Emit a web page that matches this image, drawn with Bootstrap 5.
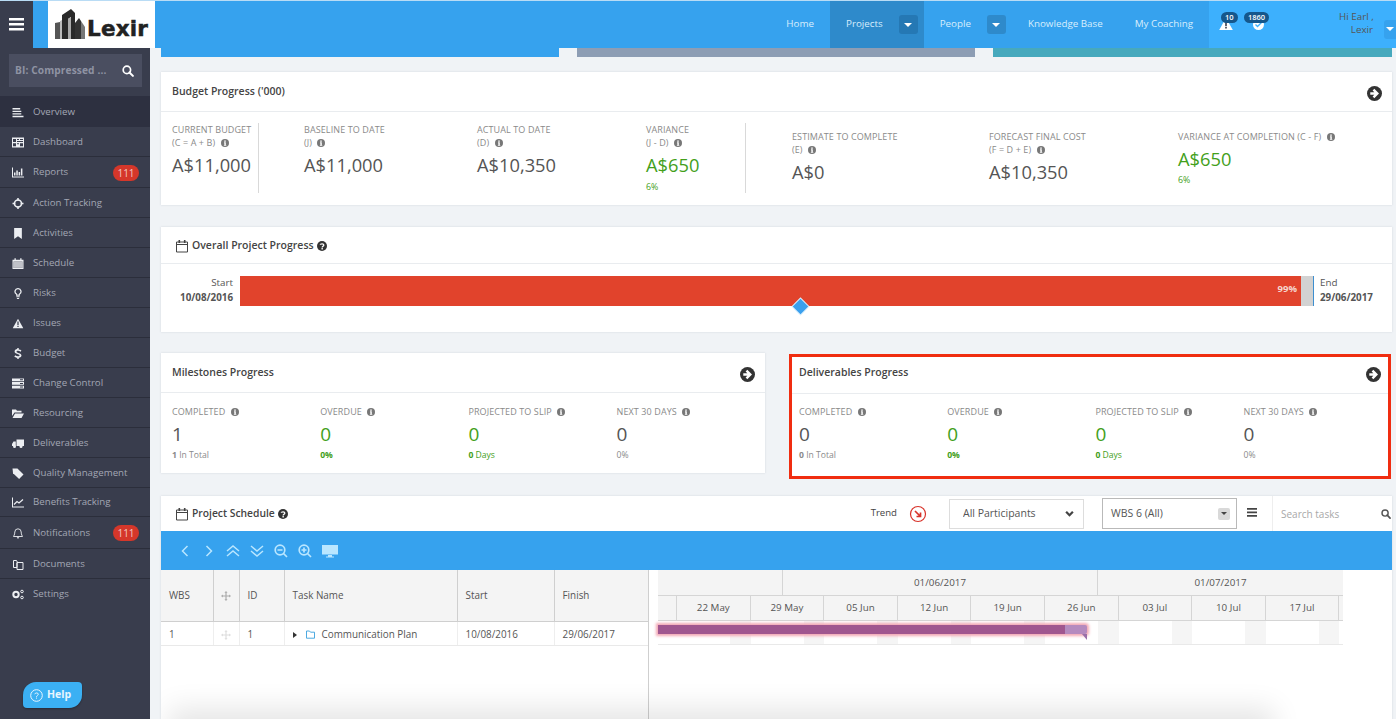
<!DOCTYPE html>
<html lang="en"><head><meta charset="utf-8"><title>Lexir</title>
<link href="https://cdn.jsdelivr.net/npm/bootstrap@5.3.0/dist/css/bootstrap.min.css" rel="stylesheet">
<style>
html,body{height:719px;overflow:hidden}
body{font-family:"Open Sans",sans-serif;font-size:10.5px;color:#555;background:#f0f3f6;line-height:1.3}
.ic{display:inline-block;fill:currentColor;flex:none}
.topline{height:1px;background:#b9dcf5}
.topbar{height:47px;background:#36a2ee;padding:0}
.burger{width:33px;height:47px;background:#393d4d;color:#fff;border:0;padding:0}
.logo-gap{width:15px}
.logo{width:107px;height:47px;background:#fff;padding:8px 0 0 7px;gap:0;align-items:flex-start}
.logo-txt{font-family:"DejaVu Sans",sans-serif;font-weight:700;font-size:21.5px;color:#222;letter-spacing:.2px;-webkit-text-stroke:.5px #222;line-height:1;margin:9px 0 0 1px}
.tn{height:47px;color:#d8eefd;font-size:9.8px;padding:0 16px;gap:16px}
.tn.on{background:#2e8acb}
.tn.has-c{padding-right:6px}
.tn-caret{width:19px;height:19px;border-radius:3px;background:#2e8acb;color:#fff;border:0;padding:0;font-size:0}
.on .tn-caret{background:#2578b4}
.tri{width:0;height:0;border:4px solid transparent;border-top:4px solid currentColor;border-bottom:0;display:inline-block}
.top-right{width:187px;height:47px;background:#3db0fd;color:#e7f5ff}
.alert-ic{position:relative;width:16px;height:16px}
.ct{position:absolute;top:-5px;left:-1px;background:#15578c;color:#fff;font-size:7.5px;font-weight:600;border-radius:8px;padding:1px 4px;line-height:9px}
.hi{font-size:9.8px;line-height:13px;text-align:right;position:absolute;left:1339px;top:9px;width:34px;white-space:nowrap}
.hi-caret{position:absolute;left:1384px;top:19px;width:12px;height:19px;background:#36a2ee;border-radius:3px 0 0 3px;color:#fff;padding:7px 0 0 2px;line-height:0}
.sidebar{width:150px;height:671px;background:#393d4d;flex:none;position:relative}
.sb-search{margin:6px 8px 9px 9px;height:33px;background:#4a4e60;color:#8f93a3;font-weight:700;font-size:10.2px;padding:0 8px 0 6px;letter-spacing:.1px}
.sb-item{height:30px;padding:1px 11px 0 12px;color:#a3a7b4;background:transparent;border:0;border-bottom:1px solid #2b2e3b;border-radius:0;font-size:9.7px;gap:0}
.sb-item.on{background:#2d3040;height:31px;border-bottom:0}
.sb-item.tall{height:31px}
.sb-item.taller{height:32px}
.sb-item .ic{color:#eceef2;margin-right:9px;width:12px;height:11px}
.sb-b{background:#d5372a;color:#f3c9c3;font-weight:400;font-size:10px;border-radius:8px;width:26px;padding:2px 0;line-height:12px}
.help{position:absolute;left:23px;top:634px;width:59px;height:26px;background:#3bb0f3;color:#e8f6ff;font-weight:700;font-size:10.5px;border-radius:13px 4px 13px 4px;gap:4px;padding-left:7px;box-shadow:0 1px 2px rgba(0,0,0,.3);border:0}
.maincol{flex:1;padding:0 4px 0 11px;min-width:0;position:relative;height:671px;overflow:hidden}
.strips{display:grid;grid-template-columns:398px 398px 399px;gap:18px;margin-bottom:15px}
.strip{height:9px}
.panel{border:0;border-radius:0;box-shadow:0 0 2px rgba(120,130,150,.25);background:#fff}
.panel .card-header{background:#fff;border-bottom:1px solid #e9ecef;border-radius:0;padding:0 11px;height:40px;color:#444;font-weight:600;font-size:10.5px}
.go{width:15px;height:15px;color:#333;margin:4px -1px 0 0}
.budget{height:133px;margin-bottom:22px}
.budget-grid{display:grid;grid-template-columns:132px 173px 169px 146px 197px 189px 1fr;padding:11px 11px 0;height:93px}
.lab{color:#8a8a8a;font-size:9px;line-height:13px;text-transform:uppercase;letter-spacing:.1px}
.val{font-size:18.3px;color:#555;line-height:24px;margin-top:4px;font-weight:400}
.grn{color:#43a01b}
.mini{font-size:8.8px;margin-top:5px}
.i{width:8px;height:8px;color:#777;vertical-align:-.5px;margin-left:3px}
.divr{border-right:1px solid #d9d9d9;height:70px}
.shift{padding-top:7px}
.overall{height:105px;margin-bottom:21px}
.overall .card-header{height:37px;font-weight:600;gap:3px;padding:1px 11px 0 14px}
.pbar-wrap{padding:12px 13px 0 18px;font-size:9.8px;gap:7px}
.pbar-edge{width:54px;text-align:right;line-height:14.5px;white-space:nowrap}
.pbar{flex:1;height:30px;background:#d2d2d2;border-right:1px solid #3d8fd0;border-radius:0;position:relative;overflow:visible}
.pbar .progress-bar{width:98.88%;background:#e1432c;color:#f6d6cf;font-weight:700;font-size:9.5px;text-align:right;padding-right:4px;overflow:visible;display:block;line-height:25px}
.pin{position:absolute;left:555px;top:25px;width:11px;height:11px;background:#3aa0ee;transform:rotate(45deg);box-shadow:0 0 0 1px #d9eefc}
.two{display:grid;grid-template-columns:604px 602px;gap:24px;align-items:start;margin-bottom:17px}
.stat{height:120px}
.stat-body{display:grid;grid-template-columns:repeat(4,148.2px);padding:12px 11px 0}
.red-box{border:3px solid #f02d10;height:125px;margin-top:1px}
.red-box .stat{box-shadow:none;height:119px}
.red-box .card-header{padding:0 8px 4px 7px;height:37px}
.red-box .go{margin-top:2px}
.red-box .stat-body{padding-left:7px;padding-top:11px}
.stat-body .val{font-size:19px;margin-top:4px;line-height:24px}
.stat-body .mini{margin-top:4px;color:#8a8a8a;font-size:8.6px}
.stat-body .mini.grn{color:#43a01b}
.sched{height:224px;position:relative;border-radius:0;overflow:hidden}
.sched-h{height:35px;padding-left:14px;color:#444;font-weight:600;font-size:10.3px;gap:3px}
.sel{font-size:10.5px;color:#555;height:30px;padding:0 8px 0 13px;border:1px solid #ddd;border-radius:0;width:135px;background-color:#fff;font-family:inherit;background-size:11px 9px;background-position:right 8px center;background-image:url("data:image/svg+xml,%3csvg xmlns='http://www.w3.org/2000/svg' viewBox='0 0 16 16'%3e%3cpath fill='none' stroke='%23444' stroke-width='4' d='M2 5l6 6 6-6'/%3e%3c/svg%3e")}
.sel2{height:31px;border:1px solid #b9b9b9;color:#555;width:135px;padding:0 6px 0 8px;font-size:10.5px}
.selbtn{width:12px;height:12px;background:#d9d9d9;color:#444;border-radius:2px}
.srch{width:120px;height:35px;border-left:1px solid #eee;padding:0 1px 0 8px}
.srch input{border:0;padding:0;font-size:10px;height:28px;color:#555;box-shadow:none;width:100px;border-radius:0}
.srch input::placeholder{color:#a8a8a8}
.tools{height:39px;background:#36a2ee;color:#b9e6ff;padding-left:17px;gap:0}
.tools svg{width:14px;height:14px;margin-right:10px}
.tbl{width:487px;table-layout:fixed;margin:0;font-size:9.9px;color:#555}
.tbl th{background:#f4f4f4;font-weight:400;height:51px;padding:0 0 0 8px;border-right:1px solid #cfcfcf;border-bottom:1px solid #cfcfcf;vertical-align:middle}
.tbl td{height:24px;padding:2px 0 0 8px;border-right:1px solid #eee;border-bottom:1px solid #e9e9e9;vertical-align:middle;background:#fff}
.tbl th:last-child,.tbl td:last-child{border-right:0}
.left{width:487px;border-right:1px solid #cfcfcf;height:150px;box-sizing:content-box}
.gutter{width:9px}
.gantt{width:685px;font-size:9.8px;color:#555;position:relative}
.g1{height:26px;background:#f4f4f4;border-bottom:1px solid #d5d5d5}
.g1>div{border-right:1px solid #d5d5d5;text-align:center;line-height:25px}
.g2{height:25px;background:#f4f4f4;border-bottom:1px solid #d5d5d5}
.g2>div{border-right:1px solid #d5d5d5;text-align:center;line-height:24px;width:73.6px;flex:none}
.g3{height:24px;border-bottom:1px solid #e9e9e9;background-image:repeating-linear-gradient(90deg,#fff 0,#fff 53px,#f5f5f5 53px,#f5f5f5 73.6px);background-position:19px 0}
.gbar{position:absolute;left:0;top:55px;width:429px;height:9px;background:#b58abf;box-shadow:0 0 3px 2px #f3a6b4;border-radius:0 2px 2px 0}
.gbar-d{height:100%;width:407px;background:#a0568f}
.gnot{position:absolute;right:0;top:9px;border-top:6px solid #9b6fa8;border-left:5px solid transparent}
.fade-b{position:absolute;left:20px;right:130px;bottom:-30px;height:30px;box-shadow:0 0 28px 12px rgba(0,0,0,.1);pointer-events:none}
</style></head>
<body>
<svg width="0" height="0" class="position-absolute">
<defs>
<symbol id="cal" viewBox="0 0 14 14"><path d="M1.5 3h11v10h-11zM1.5 5.500h11" fill="none" stroke="currentColor" stroke-width="1"/><path d="M3.500 1h1.600v3H3.500zM8.900 1h1.600v3H8.900z"/></symbol>
<symbol id="go" viewBox="0 0 16 16"><circle cx="8" cy="8" r="8"/><path d="M3.500 6.600h4.300L6 4.800l1.800-1.800L12.800 8l-5 5L6 11.200l1.800-1.800H3.500z" fill="#fff"/></symbol>
<symbol id="inf" viewBox="0 0 10 10"><circle cx="5" cy="5" r="5"/><path d="M4 1.800h2v1.500H4zM3.800 4.200h2.200v3.200h.6v1H3.600v-1h.6V5.200h-.4z" fill="#fff"/></symbol>
<symbol id="q" viewBox="0 0 12 12"><circle cx="6" cy="6" r="6"/><path d="M3.800 4.500C4 3 8.200 2.700 8.200 4.800c0 1.500-2 1.500-2 3" fill="none" stroke="#fff" stroke-width="1.500"/><rect x="5.300" y="8.500" width="1.800" height="1.600" fill="#fff"/></symbol>
<symbol id="mag" viewBox="0 0 14 14"><circle cx="5.700" cy="5.700" r="4.300" fill="none" stroke="currentColor" stroke-width="2"/><path d="M8.700 8.700l4 4" stroke="currentColor" stroke-width="2.400" stroke-linecap="round"/></symbol>
<symbol id="warn" viewBox="0 0 14 14"><path d="M7 .8L13.800 13H.2z"/><path d="M6.200 4.500h1.600v4.500H6.200zM6.200 9.800h1.600v1.600H6.200z" fill="#393d4d"/></symbol>
<symbol id="mv" viewBox="0 0 14 14"><path d="M7 0l2.200 2.600H7.800v3.600h3.600V4.800L14 7l-2.600 2.200V7.800H7.800v3.600h1.400L7 14l-2.200-2.600h1.400V7.800H2.600v1.400L0 7l2.600-2.200v1.400h3.600V2.600H4.800z"/></symbol>
</defs>
</svg>
<div class="topline"></div>
<nav class="navbar topbar flex-nowrap align-items-start">
  <button class="burger d-flex align-items-center justify-content-center" aria-label="Menu"><svg width="15" height="13" viewBox="0 0 15 13" class="ic"><path d="M0 0h15v2.500H0zM0 5h15v2.500H0zM0 10h15v2.500H0z"/></svg></button>
  <div class="logo-gap"></div>
  <div class="logo d-flex">
    <svg width="31" height="31" viewBox="0 0 31 31" class="ic"><path d="M0 30V14l5-1v17z" fill="#555"/><path d="M5 30V12l2-1v19z" fill="#bbb"/><path d="M7 30V6l9-6 4 4v26h-4V8l-3 2v20z" fill="#2a2a2a"/><path d="M13 30V10l3-2v22z" fill="#aaa"/><path d="M20 30V14l4-5 2 3v18z" fill="#333"/><path d="M26 30V12l4 6v12z" fill="#777"/></svg>
    <span class="logo-txt">Lexir</span>
  </div>
  <div class="d-flex ms-auto align-items-start">
    <a class="tn d-flex align-items-center text-decoration-none">Home</a>
    <div class="tn has-c on d-flex align-items-center"><span>Projects</span><button class="tn-caret d-flex align-items-center justify-content-center" aria-label="Projects menu"><i class="tri"></i></button></div>
    <div class="tn has-c d-flex align-items-center"><span>People</span><button class="tn-caret d-flex align-items-center justify-content-center" aria-label="People menu"><i class="tri"></i></button></div>
    <a class="tn d-flex align-items-center text-decoration-none">Knowledge Base</a>
    <a class="tn d-flex align-items-center text-decoration-none">My Coaching</a>
    <div class="top-right d-flex align-items-center ps-2">
      <span class="alert-ic d-inline-block" style="margin-left:2px"><svg width="14" height="14" class="ic" style="color:#fff"><use href="#warn"/></svg><span class="ct" style="left:2px">10</span></span>
      <span class="alert-ic d-inline-block" style="margin-left:18px"><svg width="11" height="11" viewBox="0 0 11 11" class="ic" style="margin-top:2px;color:#fff"><circle cx="5.500" cy="5.500" r="5.500"/><path d="M2.500 5.500l2 2 4-4" fill="none" stroke="#3db0fd" stroke-width="1.300"/></svg><span class="ct" style="left:-9px">1860</span></span>
    </div>
  </div>
  <div class="hi">Hi Earl ,<br>Lexir</div>
  <div class="hi-caret"><i class="tri"></i></div>
</nav>
<div class="d-flex">
<aside class="sidebar">
  <div class="sb-search d-flex align-items-center justify-content-between"><span>BI: Compressed ...</span><svg width="12" height="12" class="ic" style="color:#fff"><use href="#mag"/></svg></div>
  <div class="list-group list-group-flush">
    <a class="list-group-item sb-item on d-flex align-items-center"><svg class="ic" viewBox="0 0 10 10"><path d="M0 1h7v1.300H0zM0 3.300h8v1.300H0zM0 5.600h8v1.300H0zM0 8h10v1.300H0z"/></svg>Overview</a>
    <a class="list-group-item sb-item d-flex align-items-center"><svg class="ic" viewBox="0 0 12 10"><path d="M0 0h12v10H0zM1 1.500v3h3v-3zM5 1.500v1h2v-1zM8 1.500v1h3v-1zM5 3.500v1h6v-1zM1 5.800v3h3v-3zM5 5.800v1h2v-1zM8 5.800v3h3v-3z" fill-rule="evenodd"/></svg>Dashboard</a>
    <a class="list-group-item sb-item tall d-flex align-items-center"><svg class="ic" viewBox="0 0 12 10"><path d="M0 0h1v9h11v1H0zM2 5h1.500v3H2zM4.300 3h1.500v5H4.300zM6.600 4.500h1.500V8H6.600zM8.900 1h1.500v7H8.900z"/></svg>Reports<span class="badge sb-b ms-auto">111</span></a>
    <a class="list-group-item sb-item d-flex align-items-center"><svg class="ic" viewBox="0 0 10 10"><circle cx="5" cy="5" r="3.200" fill="none" stroke="currentColor" stroke-width="1.500"/><path d="M4.300 0h1.400v2.500H4.300zM4.300 7.500h1.400V10H4.300zM0 4.300h2.500v1.400H0zM7.500 4.300H10v1.400H7.500z"/></svg>Action Tracking</a>
    <a class="list-group-item sb-item d-flex align-items-center"><svg class="ic" viewBox="0 0 10 10"><path d="M1.500 0h7v10L5 7.500 1.500 10z"/></svg>Activities</a>
    <a class="list-group-item sb-item d-flex align-items-center"><svg class="ic" viewBox="0 0 10 10"><path d="M0 1.500h1.800V.2h1.200v1.300h4V.2h1.200v1.300H10V10H0zM1 3.200V9h8V3.200z" fill-rule="evenodd"/><path d="M1 3.200h8V9H1z" fill-opacity=".75"/></svg>Schedule</a>
    <a class="list-group-item sb-item d-flex align-items-center"><svg class="ic" viewBox="0 0 10 10"><path d="M5 0a3.200 3.200 0 0 0-1.800 5.900V7h3.600V5.900A3.200 3.200 0 0 0 5 0zm0 1.200a2 2 0 0 1 1 3.800v.8H4V5a2 2 0 0 1 1-3.800zM3.500 7.600h3v.9h-3zM4 9h2v1H4z" fill-rule="evenodd"/></svg>Risks</a>
    <a class="list-group-item sb-item d-flex align-items-center"><svg class="ic" viewBox="0 0 14 14"><use href="#warn"/></svg>Issues</a>
    <a class="list-group-item sb-item d-flex align-items-center"><svg class="ic" viewBox="0 0 10 12"><path d="M4.200 0h1.600v1.500c1.300.1 2.300.6 2.900 1.100L7.800 4C7 3.500 6 3.100 5 3.100c-1 0-1.600.4-1.600 1 0 1.700 5.400 1 5.400 4.200 0 1.400-1.100 2.200-3 2.400V12H4.200v-1.300c-1.300-.1-2.500-.7-3.200-1.400l1-1.400c.9.700 1.900 1.200 3 1.200s1.700-.4 1.700-1.100c0-1.700-5.400-1-5.400-4.100 0-1.500 1.100-2.400 2.900-2.700z"/></svg>Budget</a>
    <a class="list-group-item sb-item d-flex align-items-center"><svg class="ic" viewBox="0 0 12 10"><path d="M0 0h12v2.700H0zM0 3.600h12v2.700H0zM0 7.300h12V10H0z"/><path d="M8 .8h3v1H8zM8 4.500h3v1H8zM8 8.100h3v1H8z" fill="#393d4d"/></svg>Change Control</a>
    <a class="list-group-item sb-item d-flex align-items-center"><svg class="ic" viewBox="0 0 12 10"><path d="M0 1h4l1 1.300h4.500V4H2.500L0 7.500zM3 5h9l-2.500 4.500H.5z"/></svg>Resourcing</a>
    <a class="list-group-item sb-item d-flex align-items-center"><svg class="ic" viewBox="0 0 12 10"><path d="M4.500 1H12v6.500H4.500zM3.800 3v4.500H0V5.500L1.500 3z"/><circle cx="2.500" cy="8" r="1.500"/><circle cx="9" cy="8" r="1.500"/></svg>Deliverables</a>
    <a class="list-group-item sb-item d-flex align-items-center"><svg class="ic" viewBox="0 0 10 10"><path d="M0 .5h4.500L10 6 6 10 .5 4.700z"/></svg>Quality Management</a>
    <a class="list-group-item sb-item d-flex align-items-center" style="height:29px"><svg class="ic" viewBox="0 0 12 10"><path d="M0 0h1v9h11v1H0z"/><path d="M2 7l3-3 2 1.500L11 2" fill="none" stroke="currentColor" stroke-width="1.200"/></svg>Benefits Tracking</a>
    <a class="list-group-item sb-item taller d-flex align-items-center"><svg class="ic" viewBox="0 0 10 11"><path d="M5 .8A3.300 3.300 0 0 0 1.800 4c0 3-1.300 4-1.300 4.500h9c0-.5-1.300-1.500-1.300-4.500A3.300 3.300 0 0 0 5 .8z" fill="none" stroke="currentColor" stroke-width=".9"/><path d="M3.800 9.200h2.400a1.200 1.200 0 0 1-2.400 0z"/></svg>Notifications<span class="badge sb-b ms-auto">111</span></a>
    <a class="list-group-item sb-item d-flex align-items-center"><svg class="ic" viewBox="0 0 11 11"><path d="M4.500 3.500h6v7h-6zM1 1.500h3l1 2H4.500v5H1z" fill="none" stroke="currentColor" stroke-width="1"/></svg>Documents</a>
    <a class="list-group-item sb-item d-flex align-items-center"><svg class="ic" viewBox="0 0 12 10"><circle cx="4" cy="5" r="2.700" fill="none" stroke="currentColor" stroke-width="2"/><circle cx="10" cy="2" r="1.300" fill="none" stroke="currentColor" stroke-width="1"/><circle cx="10" cy="8" r="1.300" fill="none" stroke="currentColor" stroke-width="1"/></svg>Settings</a>
  </div>
  <button class="help d-flex align-items-center"><svg width="13" height="13" viewBox="0 0 13 13"><circle cx="6.500" cy="6.500" r="5.800" fill="none" stroke="#e8f6ff" stroke-width="1"/><path d="M4.700 5.200C4.900 3.600 8.300 3.500 8.300 5.200c0 1.300-1.800 1.300-1.800 2.600" fill="none" stroke="#e8f6ff" stroke-width="1"/><rect x="6" y="8.600" width="1" height="1" fill="#e8f6ff"/></svg>Help</button>
</aside>
<main class="maincol">
  <div class="strips">
    <div class="strip" style="background:#36a2ee"></div>
    <div class="strip" style="background:#8d9db4"></div>
    <div class="strip" style="background:#47a9bd"></div>
  </div>

  <section class="card panel budget">
    <div class="card-header d-flex align-items-center justify-content-between"><span>Budget Progress ('000)</span><svg class="ic go"><use href="#go"/></svg></div>
    <div class="budget-grid">
      <div class="divr" style="width:87px"><div class="lab">Current Budget<br>(C = A + B) <svg class="ic i"><use href="#inf"/></svg></div><div class="val">A$11,000</div></div>
      <div><div class="lab">Baseline to Date<br>(J) <svg class="ic i"><use href="#inf"/></svg></div><div class="val">A$11,000</div></div>
      <div><div class="lab">Actual to Date<br>(D) <svg class="ic i"><use href="#inf"/></svg></div><div class="val">A$10,350</div></div>
      <div class="divr" style="width:100px"><div class="lab">Variance<br>(J - D) <svg class="ic i"><use href="#inf"/></svg></div><div class="val grn">A$650</div><div class="mini grn">6%</div></div>
      <div class="shift"><div class="lab">Estimate to Complete<br>(E) <svg class="ic i"><use href="#inf"/></svg></div><div class="val">A$0</div></div>
      <div class="shift"><div class="lab">Forecast Final Cost<br>(F = D + E) <svg class="ic i"><use href="#inf"/></svg></div><div class="val">A$10,350</div></div>
      <div class="shift"><div class="lab text-nowrap">Variance at Completion (C - F) <svg class="ic i"><use href="#inf"/></svg></div><div class="val grn" style="margin-top:4px">A$650</div><div class="mini grn" style="margin-top:4px">6%</div></div>
    </div>
  </section>

  <section class="card panel overall">
    <div class="card-header d-flex align-items-center"><svg class="ic" width="14" height="14"><use href="#cal"/></svg><span>Overall Project Progress</span><svg class="ic" width="10" height="10" style="color:#333"><use href="#q"/></svg></div>
    <div class="pbar-wrap d-flex align-items-start">
      <div class="pbar-edge">Start<br><b>10/08/2016</b></div>
      <div class="progress pbar"><div class="progress-bar">99%</div><span class="pin"></span></div>
      <div class="pbar-edge text-start" style="margin-left:-1px;width:59px">End<br><b>29/06/2017</b></div>
    </div>
  </section>

  <div class="two">
    <section class="card panel stat">
      <div class="card-header d-flex align-items-center justify-content-between"><span>Milestones Progress</span><svg class="ic go"><use href="#go"/></svg></div>
      <div class="stat-body">
        <div><div class="lab">Completed <svg class="ic i"><use href="#inf"/></svg></div><div class="val">1</div><div class="mini"><b>1</b> In Total</div></div>
        <div><div class="lab">Overdue <svg class="ic i"><use href="#inf"/></svg></div><div class="val grn">0</div><div class="mini grn"><b>0%</b></div></div>
        <div><div class="lab">Projected to Slip <svg class="ic i"><use href="#inf"/></svg></div><div class="val grn">0</div><div class="mini grn"><b>0</b> Days</div></div>
        <div><div class="lab">Next 30 Days <svg class="ic i"><use href="#inf"/></svg></div><div class="val">0</div><div class="mini">0%</div></div>
      </div>
    </section>
    <div class="red-box">
    <section class="card panel stat">
      <div class="card-header d-flex align-items-center justify-content-between"><span>Deliverables Progress</span><svg class="ic go"><use href="#go"/></svg></div>
      <div class="stat-body">
        <div><div class="lab">Completed <svg class="ic i"><use href="#inf"/></svg></div><div class="val">0</div><div class="mini"><b>0</b> In Total</div></div>
        <div><div class="lab">Overdue <svg class="ic i"><use href="#inf"/></svg></div><div class="val grn">0</div><div class="mini grn"><b>0%</b></div></div>
        <div><div class="lab">Projected to Slip <svg class="ic i"><use href="#inf"/></svg></div><div class="val grn">0</div><div class="mini grn"><b>0</b> Days</div></div>
        <div><div class="lab">Next 30 Days <svg class="ic i"><use href="#inf"/></svg></div><div class="val">0</div><div class="mini">0%</div></div>
      </div>
    </section>
    </div>
  </div>

  <section class="card panel sched">
    <div class="sched-h d-flex align-items-center">
      <svg class="ic" width="14" height="14"><use href="#cal"/></svg><span>Project Schedule</span><svg class="ic" width="10" height="10" style="color:#333"><use href="#q"/></svg>
      <span class="ms-auto fw-normal" style="font-size:9.6px">Trend</span>
      <svg width="18" height="18" viewBox="0 0 18 18" style="margin:0 19px 0 9px"><circle cx="9" cy="9" r="7.500" fill="#fff" stroke="#d8332a" stroke-width="1.200"/><path d="M6 6l5 5M11.500 7.500v4h-4" fill="none" stroke="#d8332a" stroke-width="1.700"/></svg>
      <select class="form-select sel fw-normal" style="margin-right:15px" aria-label="Participants"><option>All Participants</option></select>
      <div class="sel2 d-flex align-items-center justify-content-between fw-normal"><span>WBS 6 (All)</span><span class="selbtn d-flex align-items-center justify-content-center"><i class="tri" style="border-width:3px 3px 0"></i></span></div>
      <svg width="10" height="9" viewBox="0 0 10 9" class="ic" style="margin:0 12px 2px 7px;color:#444"><path d="M0 0h10v1.800H0zM0 3.500h10v1.800H0zM0 7h10v1.800H0z"/></svg>
      <div class="srch d-flex align-items-center"><input class="form-control fw-normal" placeholder="Search tasks" aria-label="Search tasks"><svg class="ic ms-auto" width="10" height="10" style="color:#555"><use href="#mag"/></svg></div>
    </div>
    <div class="tools d-flex align-items-center">
      <svg viewBox="0 0 14 14" fill="none" stroke="currentColor" stroke-width="1.500"><path d="M9.500 2L4.500 7l5 5"/></svg>
      <svg viewBox="0 0 14 14" fill="none" stroke="currentColor" stroke-width="1.500"><path d="M4.500 2l5 5-5 5"/></svg>
      <svg viewBox="0 0 14 14" fill="none" stroke="currentColor" stroke-width="1.500"><path d="M1 7l6-5 6 5M1 12l6-5 6 5"/></svg>
      <svg viewBox="0 0 14 14" fill="none" stroke="currentColor" stroke-width="1.500"><path d="M1 2l6 5 6-5M1 7l6 5 6-5"/></svg>
      <svg viewBox="0 0 14 14" fill="none" stroke="currentColor" stroke-width="1.700"><circle cx="6" cy="6" r="4.800"/><path d="M9.500 9.500L13 13M3.500 6h5"/></svg>
      <svg viewBox="0 0 14 14" fill="none" stroke="currentColor" stroke-width="1.700"><circle cx="6" cy="6" r="4.800"/><path d="M9.500 9.500L13 13M3.500 6h5M6 3.500v5"/></svg>
      <svg viewBox="0 0 16 14" style="width:16px" fill="currentColor"><path d="M0 1h16v9.500H0zM6 11h4v1.500h2v1H4v-1h2z"/></svg>
    </div>
    <div class="d-flex">
      <div class="left">
        <table class="table tbl">
          <colgroup><col style="width:52px"><col style="width:26px"><col style="width:45px"><col style="width:173px"><col style="width:97px"><col style="width:94px"></colgroup>
          <thead><tr><th>WBS</th><th class="text-center ps-0"><svg class="ic" width="10" height="10" style="color:#aaa"><use href="#mv"/></svg></th><th>ID</th><th>Task Name</th><th>Start</th><th>Finish</th></tr></thead>
          <tbody><tr><td>1</td><td class="text-center ps-0"><svg class="ic" width="10" height="10" style="color:#ddd"><use href="#mv"/></svg></td><td>1</td><td class="text-nowrap"><i class="tri d-inline-block" style="border:3px solid transparent;border-left:4px solid #333;border-right:0;margin-right:9px"></i><svg width="10" height="9" viewBox="0 0 10 9" fill="none" stroke="#3aa0de" stroke-width=".9" style="margin-right:6px"><path d="M.5 1h3l1 1.200h4v6h-8z"/></svg>Communication Plan</td><td>10/08/2016</td><td>29/06/2017</td></tr></tbody>
        </table>
      </div>
      <div class="gutter"></div>
      <div class="gantt">
        <div class="g1 d-flex"><div style="width:125px"></div><div style="width:315px">01/06/2017</div><div style="width:245px;border-right:0">01/07/2017</div></div>
        <div class="g2 d-flex overflow-hidden"><div style="width:19px"></div><div>22 May</div><div>29 May</div><div>05 Jun</div><div>12 Jun</div><div>19 Jun</div><div>26 Jun</div><div>03 Jul</div><div>10 Jul</div><div>17 Jul</div></div>
        <div class="g3"></div>
        <div class="gbar"><div class="gbar-d"></div><i class="gnot"></i></div>
      </div>
    </div>
    <div class="fade-b"></div>
  </section>
</main>
</div>
</body></html>
